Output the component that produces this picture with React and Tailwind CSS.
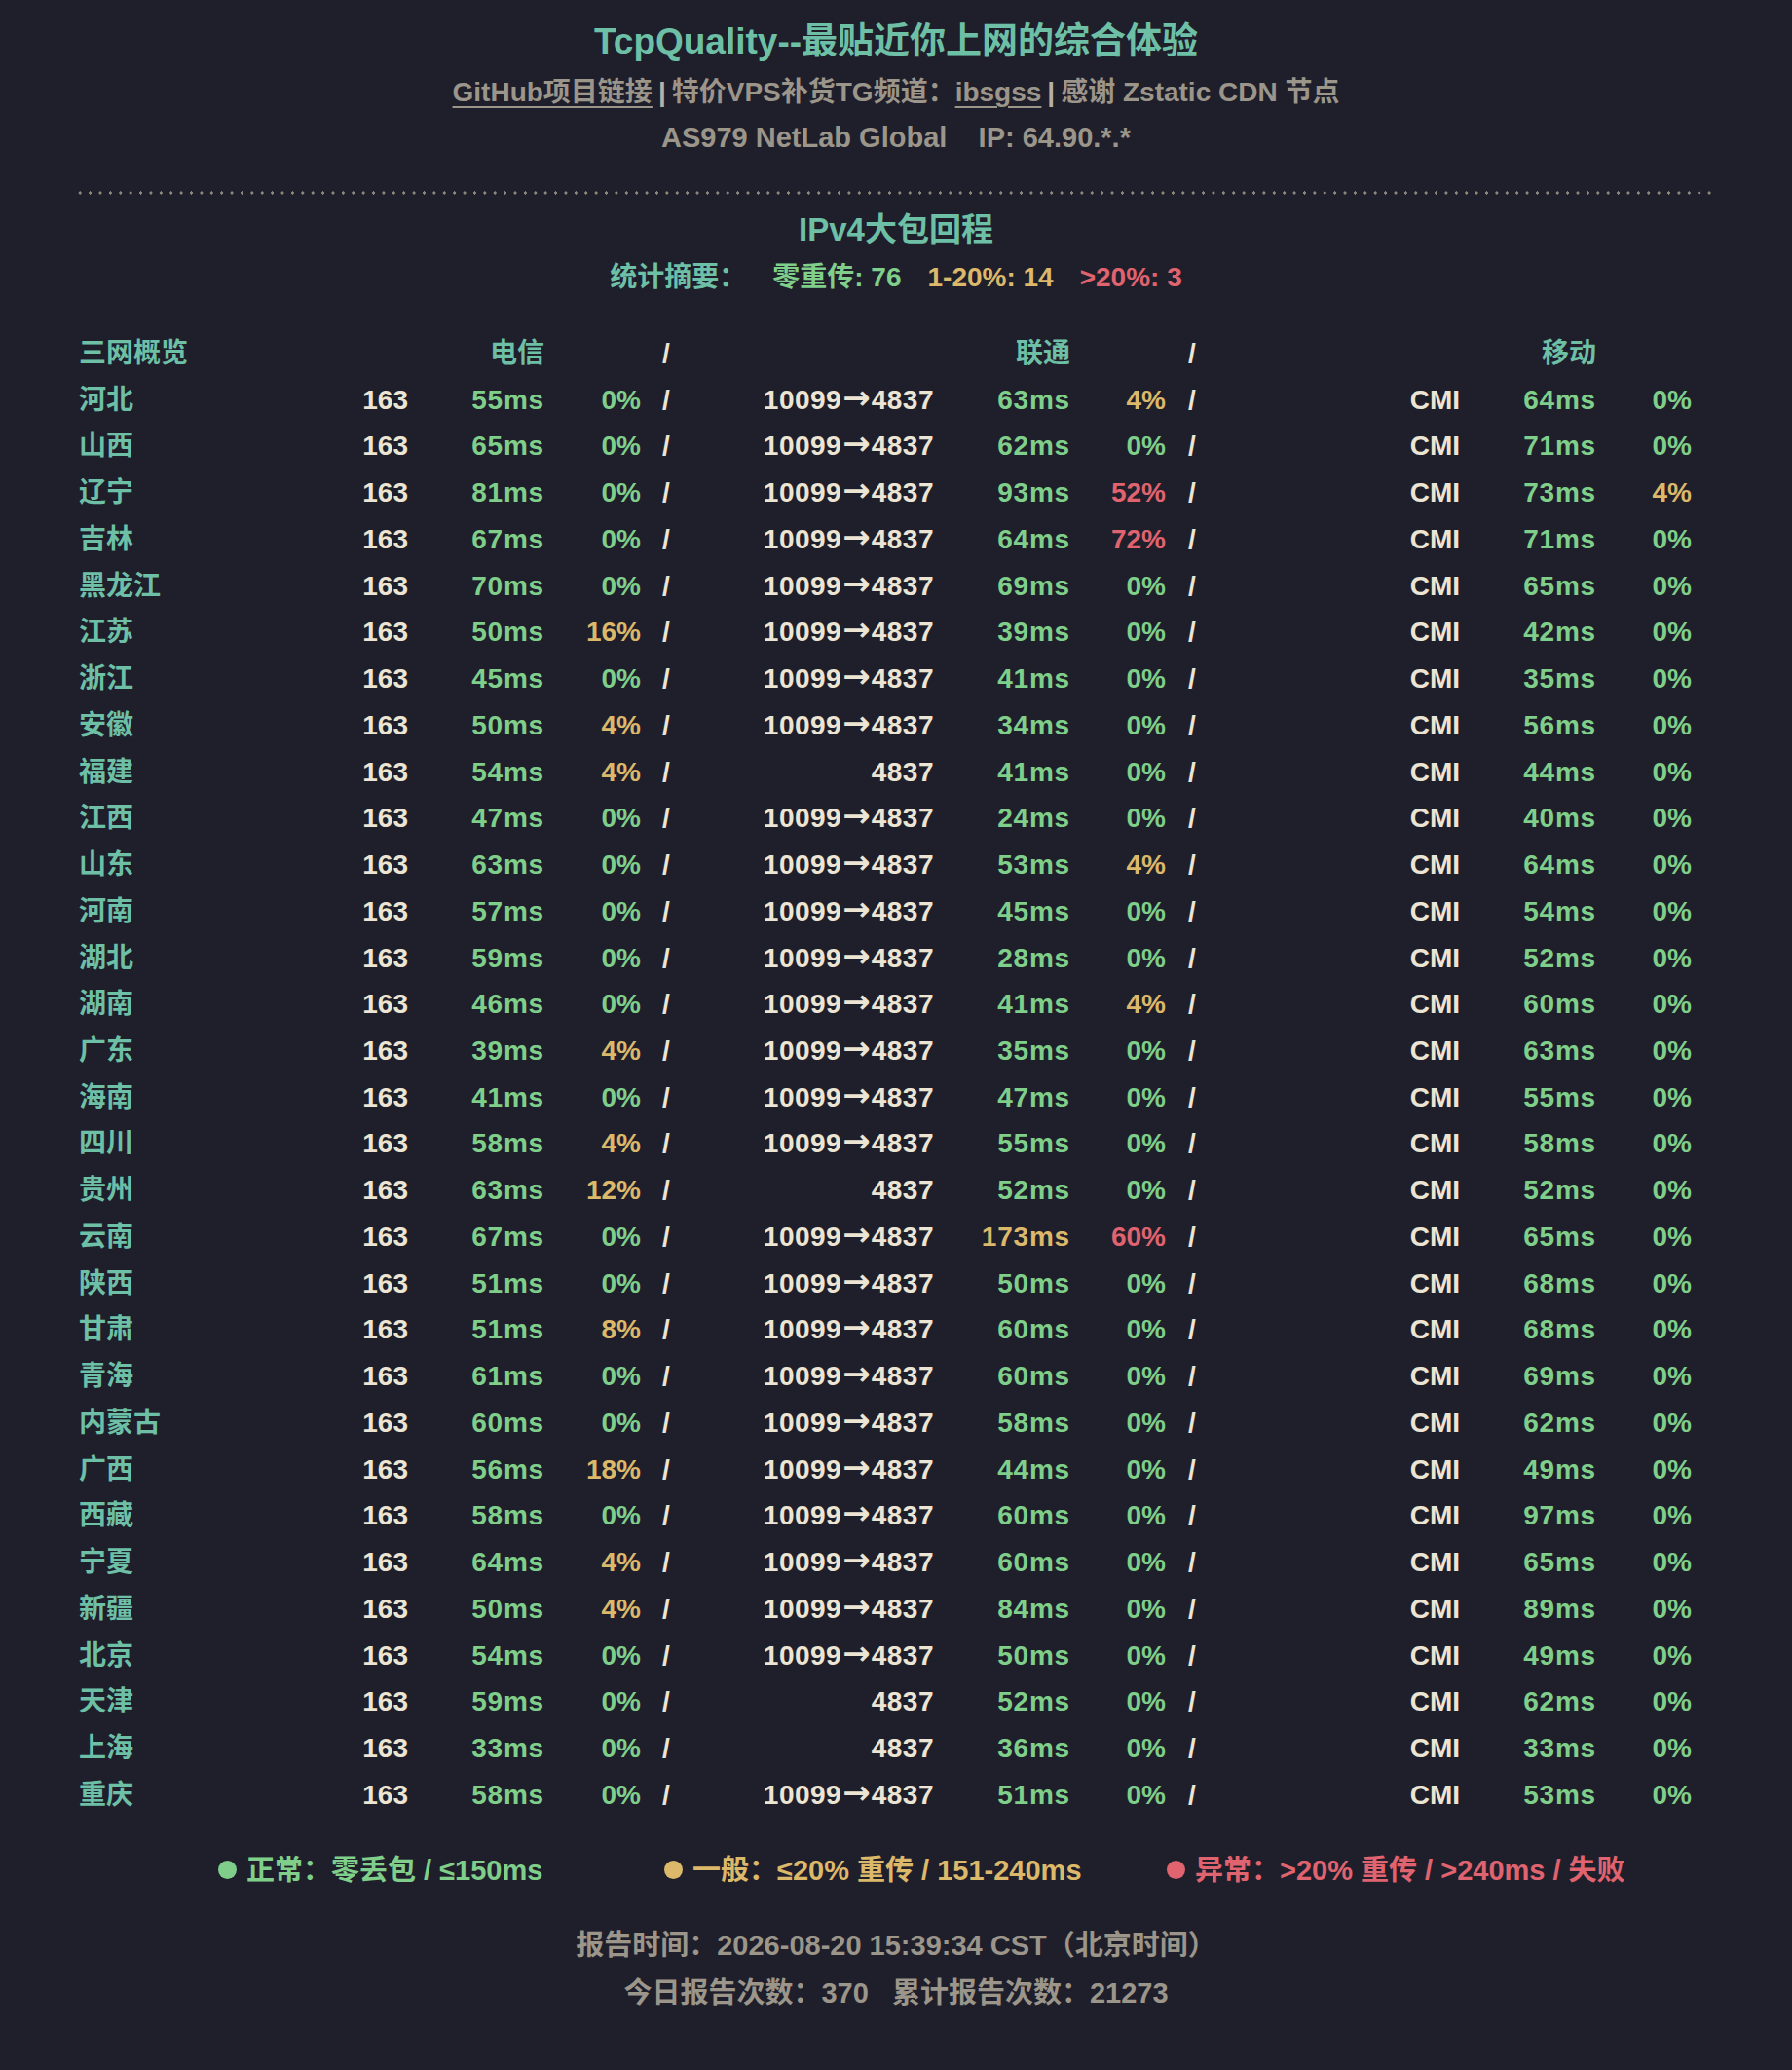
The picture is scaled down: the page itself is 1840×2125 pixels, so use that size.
import React from "react";

const rows = [
  ["河北", "55", 0, true, "63", 4, "64", 0],
  ["山西", "65", 0, true, "62", 0, "71", 0],
  ["辽宁", "81", 0, true, "93", 52, "73", 4],
  ["吉林", "67", 0, true, "64", 72, "71", 0],
  ["黑龙江", "70", 0, true, "69", 0, "65", 0],
  ["江苏", "50", 16, true, "39", 0, "42", 0],
  ["浙江", "45", 0, true, "41", 0, "35", 0],
  ["安徽", "50", 4, true, "34", 0, "56", 0],
  ["福建", "54", 4, false, "41", 0, "44", 0],
  ["江西", "47", 0, true, "24", 0, "40", 0],
  ["山东", "63", 0, true, "53", 4, "64", 0],
  ["河南", "57", 0, true, "45", 0, "54", 0],
  ["湖北", "59", 0, true, "28", 0, "52", 0],
  ["湖南", "46", 0, true, "41", 4, "60", 0],
  ["广东", "39", 4, true, "35", 0, "63", 0],
  ["海南", "41", 0, true, "47", 0, "55", 0],
  ["四川", "58", 4, true, "55", 0, "58", 0],
  ["贵州", "63", 12, false, "52", 0, "52", 0],
  ["云南", "67", 0, true, "173", 60, "65", 0],
  ["陕西", "51", 0, true, "50", 0, "68", 0],
  ["甘肃", "51", 8, true, "60", 0, "68", 0],
  ["青海", "61", 0, true, "60", 0, "69", 0],
  ["内蒙古", "60", 0, true, "58", 0, "62", 0],
  ["广西", "56", 18, true, "44", 0, "49", 0],
  ["西藏", "58", 0, true, "60", 0, "97", 0],
  ["宁夏", "64", 4, true, "60", 0, "65", 0],
  ["新疆", "50", 4, true, "84", 0, "89", 0],
  ["北京", "54", 0, true, "50", 0, "49", 0],
  ["天津", "59", 0, false, "52", 0, "62", 0],
  ["上海", "33", 0, false, "36", 0, "33", 0],
  ["重庆", "58", 0, true, "51", 0, "53", 0],
];

const GREEN = "text-[#7fcf8b]";
const YELLOW = "text-[#dcb86a]";
const RED = "text-[#e0646f]";

function msColor(v) {
  const n = parseInt(v, 10);
  if (n <= 150) return GREEN;
  if (n <= 240) return YELLOW;
  return RED;
}
function pctColor(p) {
  if (p === 0) return GREEN;
  if (p <= 20) return YELLOW;
  return RED;
}

const gridCls =
  "grid grid-cols-[249px_89px_140px_99px_42px_259px_140px_98px_43px_259px_140px_98px] leading-[47.74px] h-[47.74px] whitespace-nowrap";

function Row({ r }) {
  const [prov, tMs, tP, via, uMs, uP, mMs, mP] = r;
  return (
    <div className={gridCls}>
      <div className="text-[#6dbfa6]">{prov}</div>
      <div className="text-right text-[#ede5d3]">163</div>
      <div className={"text-right tracking-[0.8px] " + msColor(tMs)}>{tMs}ms</div>
      <div className={"text-right " + pctColor(tP)}>{tP}%</div>
      <div className="pl-[22px] text-[#ede5d3]">/</div>
      <div className="text-right text-[#ede5d3] tracking-[0.5px]">
        {via ? (
          <>
            10099
            <span className="font-['DejaVu_Sans',sans-serif] text-[34px] leading-[0px] tracking-normal mx-[1px]">→</span>
            4837
          </>
        ) : (
          "4837"
        )}
      </div>
      <div className={"text-right tracking-[0.8px] " + msColor(uMs)}>{uMs}ms</div>
      <div className={"text-right " + pctColor(uP)}>{uP}%</div>
      <div className="pl-[23px] text-[#ede5d3]">/</div>
      <div className="text-right text-[#ede5d3]">CMI</div>
      <div className={"text-right tracking-[0.8px] " + msColor(mMs)}>{mMs}ms</div>
      <div className={"text-right " + pctColor(mP)}>{mP}%</div>
    </div>
  );
}

export default function App() {
  return (
    <div className="min-h-screen w-[1840px] bg-[#1f1f2c] font-['Liberation_Sans','Noto_Sans_CJK_SC',sans-serif] font-bold pb-[59px]">
      <div className="pt-[21px] text-center">
        <h1 className="text-[37px] leading-[44px] text-[#6dbfa6]">
          TcpQuality--最贴近你上网的综合体验
        </h1>
        <div className="mt-[10px] text-[28px] leading-[40px] text-[#9b958a]">
          <span className="underline underline-offset-[5px] decoration-[2px]">GitHub项目链接</span>
          <span className="mx-[6px] text-[#b8b2a6]">|</span>
          <span>特价VPS补货TG频道：</span>
          <span className="underline underline-offset-[5px] decoration-[2px]">ibsgss</span>
          <span className="mx-[6px] text-[#b8b2a6]">|</span>
          <span>感谢 Zstatic CDN 节点</span>
        </div>
        <div className="mt-[6px] text-[29px] leading-[40px] text-[#9b958a] whitespace-pre">
          AS979 NetLab Global{"    "}IP: 64.90.*.*
        </div>
      </div>

      <div className="mt-[35px] mx-[77px] h-[4px] bg-[radial-gradient(circle,#8d887e_1.5px,transparent_1.7px)] bg-[length:10.4px_4px] bg-repeat-x" />

      <div className="mt-[16px] text-center text-[33px] leading-[40px] text-[#6dbfa6]">
        IPv4大包回程
      </div>
      <div className="mt-[9px] flex justify-center gap-[27px] text-[28px] leading-[40px]">
        <span className="text-[#6dbfa6]">统计摘要：</span>
        <span className={GREEN}>零重传: 76</span>
        <span className={YELLOW}>1-20%: 14</span>
        <span className={RED}>&gt;20%: 3</span>
      </div>

      <div className="mt-[34px] pl-[81px] text-[28px]">
        <div className={gridCls}>
          <div className="text-[#6dbfa6]">三网概览</div>
          <div />
          <div className="text-right text-[#6dbfa6]">电信</div>
          <div />
          <div className="pl-[22px] text-[#ede5d3]">/</div>
          <div />
          <div className="text-right text-[#6dbfa6]">联通</div>
          <div />
          <div className="pl-[23px] text-[#ede5d3]">/</div>
          <div />
          <div className="text-right text-[#6dbfa6]">移动</div>
          <div />
        </div>
        {rows.map((r) => (
          <Row key={r[0]} r={r} />
        ))}
      </div>

      <div className="mt-[33px] grid grid-cols-[458px_516px_1fr] pl-[224px] text-[29px] leading-[40px] whitespace-nowrap">
        <div className={"flex items-center gap-[10px] " + GREEN}>
          <span className="inline-block w-[19px] h-[19px] rounded-full bg-[#7fcf8b]" />
          <span>正常：零丢包 / ≤150ms</span>
        </div>
        <div className={"flex items-center gap-[10px] " + YELLOW}>
          <span className="inline-block w-[19px] h-[19px] rounded-full bg-[#dcb86a]" />
          <span>一般：≤20% 重传 / 151-240ms</span>
        </div>
        <div className={"flex items-center gap-[10px] " + RED}>
          <span className="inline-block w-[19px] h-[19px] rounded-full bg-[#e0646f]" />
          <span>异常：&gt;20% 重传 / &gt;240ms / 失败</span>
        </div>
      </div>

      <div className="mt-[37px] text-center text-[29px] leading-[40px] text-[#9b958a]">
        报告时间：2026-08-20 15:39:34 CST（北京时间）
      </div>
      <div className="mt-[9px] text-center text-[29px] leading-[40px] text-[#9b958a] whitespace-pre">
        今日报告次数：370{"   "}累计报告次数：21273
      </div>
    </div>
  );
}
